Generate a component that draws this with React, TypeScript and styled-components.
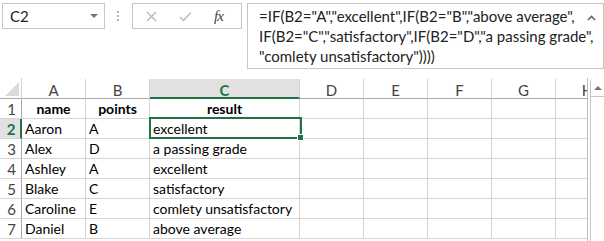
import styled, { createGlobalStyle } from "styled-components";

const GlobalStyle = createGlobalStyle`
  html, body {
    margin: 0;
    padding: 0;
    background: #ffffff;
  }
  body {
    font-family: "Lato", "Liberation Sans", sans-serif;
    color: #000;
  }
`;

const GREEN = "#217346";
const LINE = "#d4d4d4";
const HEAD_LINE = "#ababab";

const COLS = [
  { key: "A", width: 64 },
  { key: "B", width: 64 },
  { key: "C", width: 150 },
  { key: "D", width: 64 },
  { key: "E", width: 64 },
  { key: "F", width: 64 },
  { key: "G", width: 64 },
  { key: "H", width: 64 },
];

const ROWS: { cells: string[]; header?: boolean }[] = [
  { cells: ["name", "points", "result"], header: true },
  { cells: ["Aaron", "A", "excellent"] },
  { cells: ["Alex", "D", "a passing grade"] },
  { cells: ["Ashley", "A", "excellent"] },
  { cells: ["Blake", "C", "satisfactory"] },
  { cells: ["Caroline", "E", "comlety unsatisfactory"] },
  { cells: ["Daniel", "B", "above average"] },
];

const Page = styled.div`
  width: 604px;
  height: 241px;
  overflow: hidden;
  position: relative;
`;

const FormulaBar = styled.div`
  display: flex;
  align-items: flex-start;
  height: 78px;
  padding: 3px 0 0 2px;
  box-sizing: border-box;
`;

const NameBox = styled.div`
  width: 103px;
  height: 26px;
  box-sizing: border-box;
  border: 1px solid #c6c6c6;
  display: flex;
  align-items: center;
  justify-content: space-between;
  padding: 0 6px 0 7px;
  font-size: 15px;
  color: #222;
`;

const DropCaret = styled.span`
  width: 0;
  height: 0;
  border-left: 4px solid transparent;
  border-right: 4px solid transparent;
  border-top: 4px solid #777;
`;

const Grip = styled.div`
  width: 3px;
  margin: 8px 12px 0 12px;
  display: flex;
  flex-direction: column;
  gap: 2px;
  span {
    display: block;
    width: 2px;
    height: 2px;
    background: #b0b0b0;
  }
`;

const ButtonBox = styled.div`
  width: 110px;
  height: 26px;
  box-sizing: border-box;
  border: 1px solid #c6c6c6;
  display: flex;
  align-items: center;
  padding-left: 13px;
  gap: 22px;
`;

const Fx = styled.span`
  font-family: "Liberation Serif", serif;
  font-style: italic;
  font-size: 15px;
  color: #444;
  letter-spacing: -1px;
`;

const FormulaInput = styled.div`
  margin-left: 5px;
  width: 357px;
  height: 66px;
  box-sizing: border-box;
  border: 1px solid #c6c6c6;
  padding: 2px 0 0 11px;
  font-size: 15px;
  line-height: 20px;
  color: #222;
  position: relative;
  white-space: pre;
`;

const CollapseCaret = styled.svg`
  position: absolute;
  right: 7px;
  top: 11px;
`;

const Sheet = styled.div`
  display: flex;
  align-items: flex-start;
`;

const GridArea = styled.div`
  width: 588px;
  height: 163px;
  overflow: hidden;
  position: relative;
  border-right: 1px solid #bdbdbd;
  box-sizing: border-box;
`;

const Grid = styled.div`
  display: grid;
  grid-template-columns: 22px ${COLS.map((c) => `${c.width}px`).join(" ")};
  grid-auto-rows: 20px;
  grid-template-rows: 21px;
`;

const Corner = styled.div`
  border-right: 1px solid ${LINE};
  border-bottom: 1px solid ${HEAD_LINE};
  position: relative;
  &::after {
    content: "";
    position: absolute;
    right: 2px;
    bottom: 2px;
    width: 0;
    height: 0;
    border-left: 14px solid transparent;
    border-bottom: 14px solid #dcdcdc;
  }
`;

const ColHead = styled.div<{ $active?: boolean }>`
  box-sizing: border-box;
  display: flex;
  align-items: center;
  justify-content: center;
  font-size: 15px;
  padding-top: 3px;
  color: ${(p) => (p.$active ? GREEN : "#444")};
  font-weight: ${(p) => (p.$active ? 700 : 400)};
  background: ${(p) => (p.$active ? "#e1e1e1" : "#fff")};
  border-right: 1px solid ${LINE};
  border-bottom: ${(p) => (p.$active ? `2px solid ${GREEN}` : `1px solid ${HEAD_LINE}`)};
  margin-top: 1px;
  height: 20px;
  align-self: end;
`;

const RowHead = styled.div<{ $active?: boolean }>`
  box-sizing: border-box;
  display: flex;
  align-items: center;
  justify-content: center;
  font-size: 15px;
  color: ${(p) => (p.$active ? GREEN : "#444")};
  font-weight: ${(p) => (p.$active ? 700 : 400)};
  background: ${(p) => (p.$active ? "#e1e1e1" : "#fff")};
  border-right: ${(p) => (p.$active ? `2px solid ${GREEN}` : `1px solid ${HEAD_LINE}`)};
  border-bottom: 1px solid ${LINE};
  padding-left: 2px;
`;

const Cell = styled.div<{ $bold?: boolean }>`
  box-sizing: border-box;
  border-right: 1px solid ${LINE};
  border-bottom: 1px solid ${LINE};
  font-size: 14px;
  line-height: 20px;
  padding: 0 3px;
  white-space: nowrap;
  overflow: hidden;
  font-weight: ${(p) => (p.$bold ? 700 : 400)};
  text-align: ${(p) => (p.$bold ? "center" : "left")};
`;

const Selection = styled.div`
  position: absolute;
  left: 149px;
  top: 39px;
  width: 153px;
  height: 22px;
  box-sizing: border-box;
  border: 2px solid ${GREEN};
  pointer-events: none;
  &::after {
    content: "";
    position: absolute;
    right: -4px;
    bottom: -4px;
    width: 5px;
    height: 5px;
    background: ${GREEN};
    border: 1px solid #fff;
  }
`;

const Scrollbar = styled.div`
  margin-left: 2px;
  margin-top: 2px;
  width: 14px;
  height: 161px;
  border-left: 1px solid #c6c6c6;
  box-sizing: border-box;
`;

const ScrollUp = styled.div`
  height: 16px;
  border-bottom: 1px solid #c6c6c6;
  display: flex;
  align-items: center;
  justify-content: center;
  &::before {
    content: "";
    width: 0;
    height: 0;
    border-left: 4px solid transparent;
    border-right: 4px solid transparent;
    border-bottom: 4px solid #777;
  }
`;

export default function App() {
  return (
    <Page>
      <GlobalStyle />
      <FormulaBar>
        <NameBox>
          C2
          <DropCaret />
        </NameBox>
        <Grip>
          <span />
          <span />
          <span />
        </Grip>
        <ButtonBox>
          <svg width="11" height="11" viewBox="0 0 11 11">
            <path d="M1 1L10 10M10 1L1 10" stroke="#b4b4b4" strokeWidth="1.2" fill="none" />
          </svg>
          <svg width="13" height="11" viewBox="0 0 13 11">
            <path d="M1 6L4.5 9.5L12 1.5" stroke="#bcbcbc" strokeWidth="1.5" fill="none" />
          </svg>
          <Fx>fx</Fx>
        </ButtonBox>
        <FormulaInput>
          {`=IF(B2="A","excellent",IF(B2="B","above average",\nIF(B2="C","satisfactory",IF(B2="D","a passing grade",\n"comlety unsatisfactory"))))`}
          <CollapseCaret width="9" height="6" viewBox="0 0 9 6">
            <path d="M1 5L4.5 1.5L8 5" stroke="#666" strokeWidth="1.6" fill="none" />
          </CollapseCaret>
        </FormulaInput>
      </FormulaBar>
      <Sheet>
        <GridArea>
          <Grid>
            <Corner />
            {COLS.map((c) => (
              <ColHead key={c.key} $active={c.key === "C"}>
                {c.key}
              </ColHead>
            ))}
            {ROWS.map((r, i) => (
              <Row key={i} index={i + 1} cells={r.cells} header={r.header} />
            ))}
          </Grid>
          <Selection />
        </GridArea>
        <Scrollbar>
          <ScrollUp />
        </Scrollbar>
      </Sheet>
    </Page>
  );
}

function Row({ index, cells, header }: { index: number; cells: string[]; header?: boolean }) {
  return (
    <>
      <RowHead $active={index === 2}>{index}</RowHead>
      {COLS.map((c, j) => (
        <Cell key={c.key} $bold={header}>
          {cells[j] ?? ""}
        </Cell>
      ))}
    </>
  );
}
